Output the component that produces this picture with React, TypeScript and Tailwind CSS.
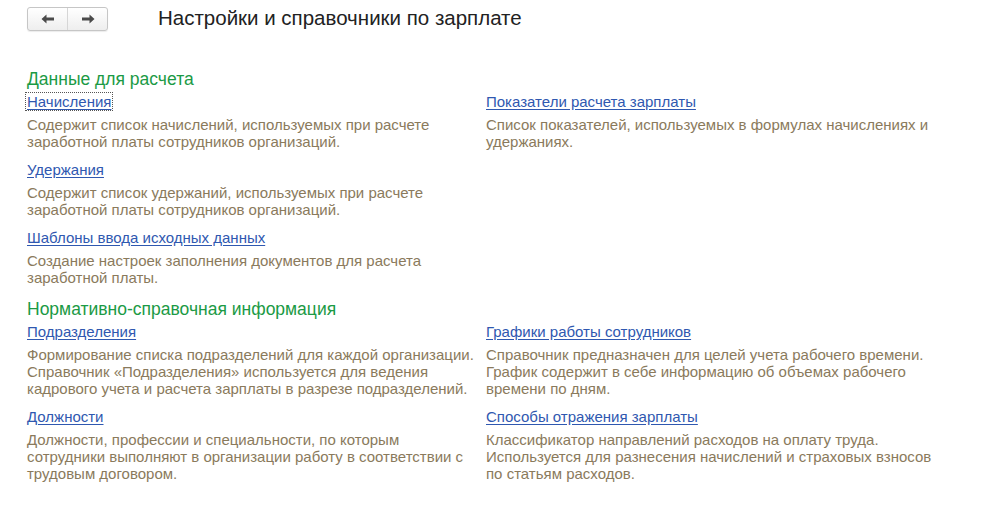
import React from "react";

type Item = { title: string; desc: string[] };

const calc: Item[] = [
  {
    title: "Начисления",
    desc: ["Содержит список начислений, используемых при расчете", "заработной платы сотрудников организаций."],
  },
  {
    title: "Удержания",
    desc: ["Содержит список удержаний, используемых при расчете", "заработной платы сотрудников организаций."],
  },
  {
    title: "Шаблоны ввода исходных данных",
    desc: ["Создание настроек заполнения документов для расчета", "заработной платы."],
  },
];

const calcRight: Item[] = [
  {
    title: "Показатели расчета зарплаты",
    desc: ["Список показателей, используемых в формулах начислениях и", "удержаниях."],
  },
];

const refLeft: Item[] = [
  {
    title: "Подразделения",
    desc: [
      "Формирование списка подразделений для каждой организации.",
      "Справочник «Подразделения» используется для ведения",
      "кадрового учета и расчета зарплаты в разрезе подразделений.",
    ],
  },
  {
    title: "Должности",
    desc: [
      "Должности, профессии и специальности, по которым",
      "сотрудники выполняют в организации работу в соответствии с",
      "трудовым договором.",
    ],
  },
];

const refRight: Item[] = [
  {
    title: "Графики работы сотрудников",
    desc: [
      "Справочник предназначен для целей учета рабочего времени.",
      "График содержит в себе информацию об объемах рабочего",
      "времени по дням.",
    ],
  },
  {
    title: "Способы отражения зарплаты",
    desc: [
      "Классификатор направлений расходов на оплату труда.",
      "Используется для разнесения начислений и страховых взносов",
      "по статьям расходов.",
    ],
  },
];

function Entry({ item, focused }: { item: Item; focused?: boolean }) {
  return (
    <div className="mb-[11px] leading-[17px]">
      <div className="flex h-[17px]">
        <a
          href="#"
          className={
            "block leading-[17px] text-[#2f58b0] underline underline-offset-2 decoration-[#2f58b0] " +
            (focused ? "outline outline-1 outline-dotted outline-[#555] -ml-px px-px" : "")
          }
        >
          {item.title}
        </a>
      </div>
      <div className="mt-[6px] text-[#8a7a5c]">
        {item.desc.map((l, i) => (
          <div key={i} className="h-[17px] whitespace-nowrap">
            {l}
          </div>
        ))}
      </div>
    </div>
  );
}

function Column({ items, focusFirst }: { items: Item[]; focusFirst?: boolean }) {
  return (
    <div className="w-[459px]">
      {items.map((it, i) => (
        <Entry key={it.title} item={it} focused={focusFirst && i === 0} />
      ))}
    </div>
  );
}

function Section({ title, left, right, focusFirst }: { title: string; left: Item[]; right: Item[]; focusFirst?: boolean }) {
  return (
    <div>
      <div className="h-[19px] text-[17.5px] leading-[19px] text-[#1b9a45] mb-[4px] whitespace-nowrap">{title}</div>
      <div className="flex">
        <Column items={left} focusFirst={focusFirst} />
        <Column items={right} />
      </div>
    </div>
  );
}

export default function App() {
  return (
    <div
      className="w-[986px] h-[516px] bg-white text-[15px] leading-[17px] overflow-hidden"
      style={{ fontFamily: '"Liberation Sans", Arial, sans-serif' }}
    >
      <div className="flex items-center pl-[27px] pt-[7px] h-[31px]">
        <div className="flex h-[24px] w-[81px] rounded-[3px] border border-[#c6c6c6] bg-gradient-to-b from-white to-[#eeeeee] shadow-[0_1px_1px_rgba(0,0,0,0.08)]">
          <button className="flex flex-1 items-center justify-center border-r border-[#d6d6d6]">
            <svg width="14" height="10" viewBox="0 0 14 10">
              <path d="M0.5 5 L5.5 0.5 L5.5 3.5 L13 3.5 L13 6.5 L5.5 6.5 L5.5 9.5 Z" fill="#4a4a4a" />
            </svg>
          </button>
          <button className="flex flex-1 items-center justify-center">
            <svg width="14" height="10" viewBox="0 0 14 10">
              <path d="M13.5 5 L8.5 0.5 L8.5 3.5 L1 3.5 L1 6.5 L8.5 6.5 L8.5 9.5 Z" fill="#4a4a4a" />
            </svg>
          </button>
        </div>
        <h1 className="ml-[50px] text-[20.5px] leading-[24px] text-[#222] -mt-[3px] whitespace-nowrap">
          Настройки и справочники по зарплате
        </h1>
      </div>

      <div className="pl-[27px] pt-[39px]">
        <Section title="Данные для расчета" left={calc} right={calcRight} focusFirst />
        <div className="mt-[3px]">
          <Section title="Нормативно-справочная информация" left={refLeft} right={refRight} />
        </div>
      </div>
    </div>
  );
}
